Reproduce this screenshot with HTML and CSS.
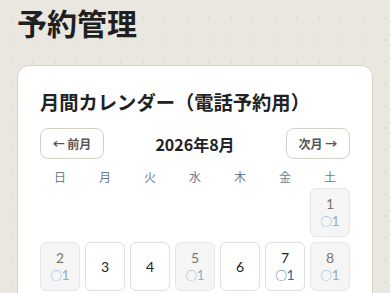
FILE: index.html
```html
<!DOCTYPE html>
<html lang="ja">
<head>
    <meta charset="UTF-8">
    <meta name="viewport" content="width=device-width, initial-scale=1.0">
    <title>予約管理</title>
    <link rel="stylesheet" href="styles.css">
</head>
<body>

    <h1 class="page-title">予約管理</h1>

    <div class="card">
        <h2 class="card-title">月間カレンダー（電話予約用）</h2>

        <div class="month-nav">
            <button class="nav-btn">← 前月</button>
            <div class="month-label">2026年8月</div>
            <button class="nav-btn">次月 →</button>
        </div>

        <div class="weekdays">
            <div>日</div><div>月</div><div>火</div><div>水</div><div>木</div><div>金</div><div>土</div>
        </div>

        <div class="days">
            <div class="empty"></div>
            <div class="empty"></div>
            <div class="empty"></div>
            <div class="empty"></div>
            <div class="empty"></div>
            <div class="empty"></div>
            <div class="day closed"><span class="num">1</span><span class="slot"><span class="mark">○</span>1</span></div>

            <div class="day closed"><span class="num">2</span><span class="slot"><span class="mark">○</span>1</span></div>
            <div class="day"><span class="num">3</span></div>
            <div class="day"><span class="num">4</span></div>
            <div class="day closed"><span class="num">5</span><span class="slot"><span class="mark">○</span>1</span></div>
            <div class="day"><span class="num">6</span></div>
            <div class="day"><span class="num">7</span><span class="slot"><span class="mark">○</span>1</span></div>
            <div class="day closed"><span class="num">8</span><span class="slot"><span class="mark">○</span>1</span></div>
        </div>
    </div>

</body>
</html>
```

FILE: styles.css
```css
/* Page */
body {
    font-family: "Noto Sans CJK JP", "Noto Sans", sans-serif;
    background-color: #eae7e0;
    background-image: radial-gradient(circle, #dedad2 1px, transparent 1.5px);
    background-size: 22px 22px;
    background-position: 0 7px;
    color: #222;
    margin: 0;
    padding: 0 17px;
}

.page-title {
    font-size: 30px;
    font-weight: 700;
    line-height: 1.3;
    margin: 0;
    padding-top: 3px;
    height: 62px;
    color: #1f1f1f;
}

.card {
    background: #fff;
    border: 1px solid #d9d4c8;
    border-radius: 12px;
    padding: 23px 22px 20px;
}

.card-title {
    font-size: 19.3px;
    font-weight: 700;
    line-height: 1.4;
    margin: 0 0 12px;
    color: #222;
}

.month-nav {
    display: flex;
    align-items: center;
    justify-content: space-between;
    margin-bottom: 8px;
}

.nav-btn {
    font-family: inherit;
    font-size: 12px;
    font-weight: 700;
    color: #555;
    background: #fff;
    border: 1px solid #d6d1c6;
    border-radius: 8px;
    width: 64px;
    height: 31px;
    padding: 0;
}

.month-label {
    font-size: 16px;
    font-weight: 700;
    color: #222;
}

.weekdays {
    display: grid;
    grid-template-columns: repeat(7, 1fr);
    gap: 5px;
    text-align: center;
    font-size: 12px;
    line-height: 20px;
    color: #6d7b8e;
    margin-bottom: 1px;
}

.days {
    display: grid;
    grid-template-columns: repeat(7, 1fr);
    gap: 5px;
}

.day {
    height: 49px;
    box-sizing: border-box;
    border: 1px solid #dedede;
    border-radius: 6px;
    background: #fff;
    display: flex;
    flex-direction: column;
    align-items: center;
    justify-content: center;
    font-family: Lato, "Noto Sans CJK JP", sans-serif;
}

.day .num {
    font-size: 14px;
    line-height: 17px;
    color: #222;
}

.day .slot {
    font-size: 14px;
    line-height: 17px;
    color: #2c6d9a;
}

.day .mark {
    font-family: "Noto Sans CJK JP", sans-serif;
    font-size: 11.5px;
    margin-right: -0.5px;
}

.day.closed {
    background: #f5f5f5;
    border-color: #e6e6e6;
}

.day.closed .num {
    color: #7b746e;
}

.day.closed .slot {
    color: #8fb0c8;
}
```
